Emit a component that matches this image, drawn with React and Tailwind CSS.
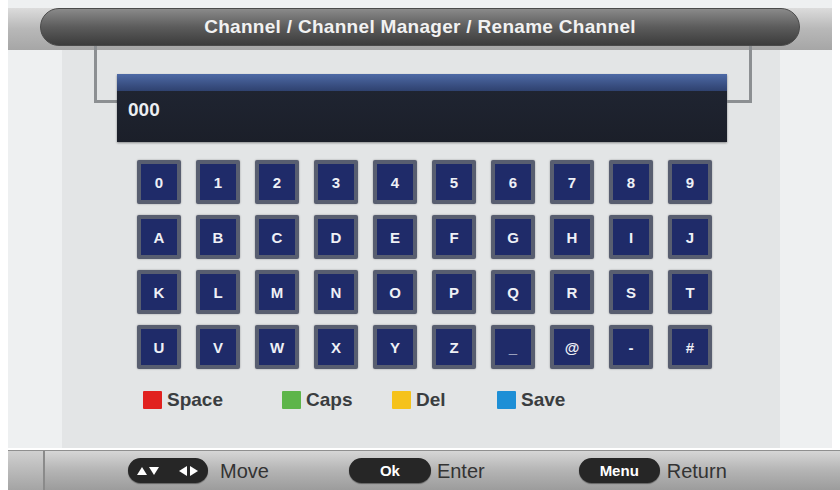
import React from "react";

const keys = [
  ["0", "1", "2", "3", "4", "5", "6", "7", "8", "9"],
  ["A", "B", "C", "D", "E", "F", "G", "H", "I", "J"],
  ["K", "L", "M", "N", "O", "P", "Q", "R", "S", "T"],
  ["U", "V", "W", "X", "Y", "Z", "_", "@", "-", "#"],
];

const legend = [
  { label: "Space", color: "bg-[#e1211f]", w: "w-[139px]" },
  { label: "Caps", color: "bg-[#5db54a]", w: "w-[110px]" },
  { label: "Del", color: "bg-[#f5c21b]", w: "w-[105px]" },
  { label: "Save", color: "bg-[#1e8fd6]", w: "w-[100px]" },
];

function Key({ ch }) {
  return (
    <div className="w-[44px] h-[44px] rounded-[2px] bg-[#585e70] p-[4px] shadow-[0_0_2px_rgba(0,0,0,0.35)]">
      <div className="w-full h-full bg-[#1f2b69] flex items-center justify-center text-[15px] font-bold text-[#eef0f6] leading-none">
        {ch}
      </div>
    </div>
  );
}

function Arrows() {
  return (
    <svg width="62" height="12" viewBox="0 0 62 12" fill="white">
      <polygon points="0,10 5,2 10,10" />
      <polygon points="12,2 22,2 17,10" />
      <polygon points="42,6 50,1 50,11" />
      <polygon points="53,1 61,6 53,11" />
    </svg>
  );
}

function Pill({ children, w }) {
  return (
    <div
      className={`${w} h-[25px] rounded-full bg-[#262626] flex items-center justify-center text-white text-[15px] font-bold leading-none shadow-[0_1px_1px_rgba(0,0,0,0.4)]`}
    >
      {children}
    </div>
  );
}

export default function App() {
  return (
    <div
      className="w-[840px] h-[490px] bg-white overflow-hidden flex flex-col"
      style={{ fontFamily: '"Liberation Sans", Arial, sans-serif' }}
    >
      <div className="mx-2 flex-1 flex flex-col bg-[#eef0f1]">
        {/* header */}
        <div className="mt-2 h-[42px] bg-gradient-to-b from-[#dcdcdc] via-[#b8b8b8] to-[#a6a6a6]">
          <div className="mx-8 h-[38px] rounded-full bg-gradient-to-b from-[#8a8a8a] via-[#5c5c5c] to-[#3c3c3c] border border-[#4a4a4a] flex items-center justify-center">
            <span className="text-[19px] font-bold text-[#f2f2f2] tracking-[0.3px]">
              Channel / Channel Manager / Rename Channel
            </span>
          </div>
        </div>

        {/* body */}
        <div className="flex-1 ml-[54px] mr-[52px] bg-[#e3e5e6] flex flex-col">
          <div className="flex items-start">
            <div className="ml-[32px] w-[23px] h-[57px] border-l-[3px] border-b-[3px] border-[#8c8f92] -mt-[4px]" />
            <div className="mt-[24px] w-[610px] h-[68px] flex flex-col shadow-[0_1px_2px_rgba(0,0,0,0.4)]">
              <div className="h-[18px] bg-gradient-to-b from-[#4e6aa6] to-[#2d3f6c]" />
              <div className="flex-1 bg-gradient-to-b from-[#1f2431] to-[#1b1f29] flex items-center pl-[11px] -mt-[1px]">
                <span className="text-[19px] font-bold text-[#eceef2] leading-none -mt-[14px]">000</span>
              </div>
            </div>
            <div className="w-[25px] h-[57px] border-r-[3px] border-b-[3px] border-[#8c8f92] -mt-[4px]" />
          </div>

          <div className="ml-[75px] mt-[18px] grid grid-cols-[repeat(10,44px)] gap-x-[15px] gap-y-[11px]">
            {keys.flat().map((k) => (
              <Key key={k} ch={k} />
            ))}
          </div>

          <div className="ml-[81px] mt-[21px] flex items-center">
            {legend.map((l) => (
              <div key={l.label} className={`${l.w} flex items-center`}>
                <div className={`w-[19px] h-[18px] ${l.color} rounded-[1px]`} />
                <span className="ml-[5px] text-[19px] font-bold text-[#3a3d40] leading-none">
                  {l.label}
                </span>
              </div>
            ))}
          </div>
        </div>
      </div>

      {/* bottom bar */}
      <div className="ml-2 mt-[2px] h-[40px] border-t border-[#8f8f8f] bg-gradient-to-b from-[#d6d6d6] via-[#b4b4b4] to-[#9c9c9c] flex items-center">
        <div className="w-[37px] h-full border-r-2 border-[#8a8a8a] bg-gradient-to-b from-[#d0d0d0] to-[#a4a4a4]" />
        <div className="ml-[83px]">
          <Pill w="w-[80px]">
            <Arrows />
          </Pill>
        </div>
        <span className="ml-[12px] text-[20px] text-[#333] leading-none">Move</span>
        <div className="ml-[80px]">
          <Pill w="w-[82px]">Ok</Pill>
        </div>
        <span className="ml-[6px] text-[20px] text-[#333] leading-none">Enter</span>
        <div className="ml-[94px]">
          <Pill w="w-[81px]">Menu</Pill>
        </div>
        <span className="ml-[7px] text-[20px] text-[#333] leading-none">Return</span>
      </div>
    </div>
  );
}
